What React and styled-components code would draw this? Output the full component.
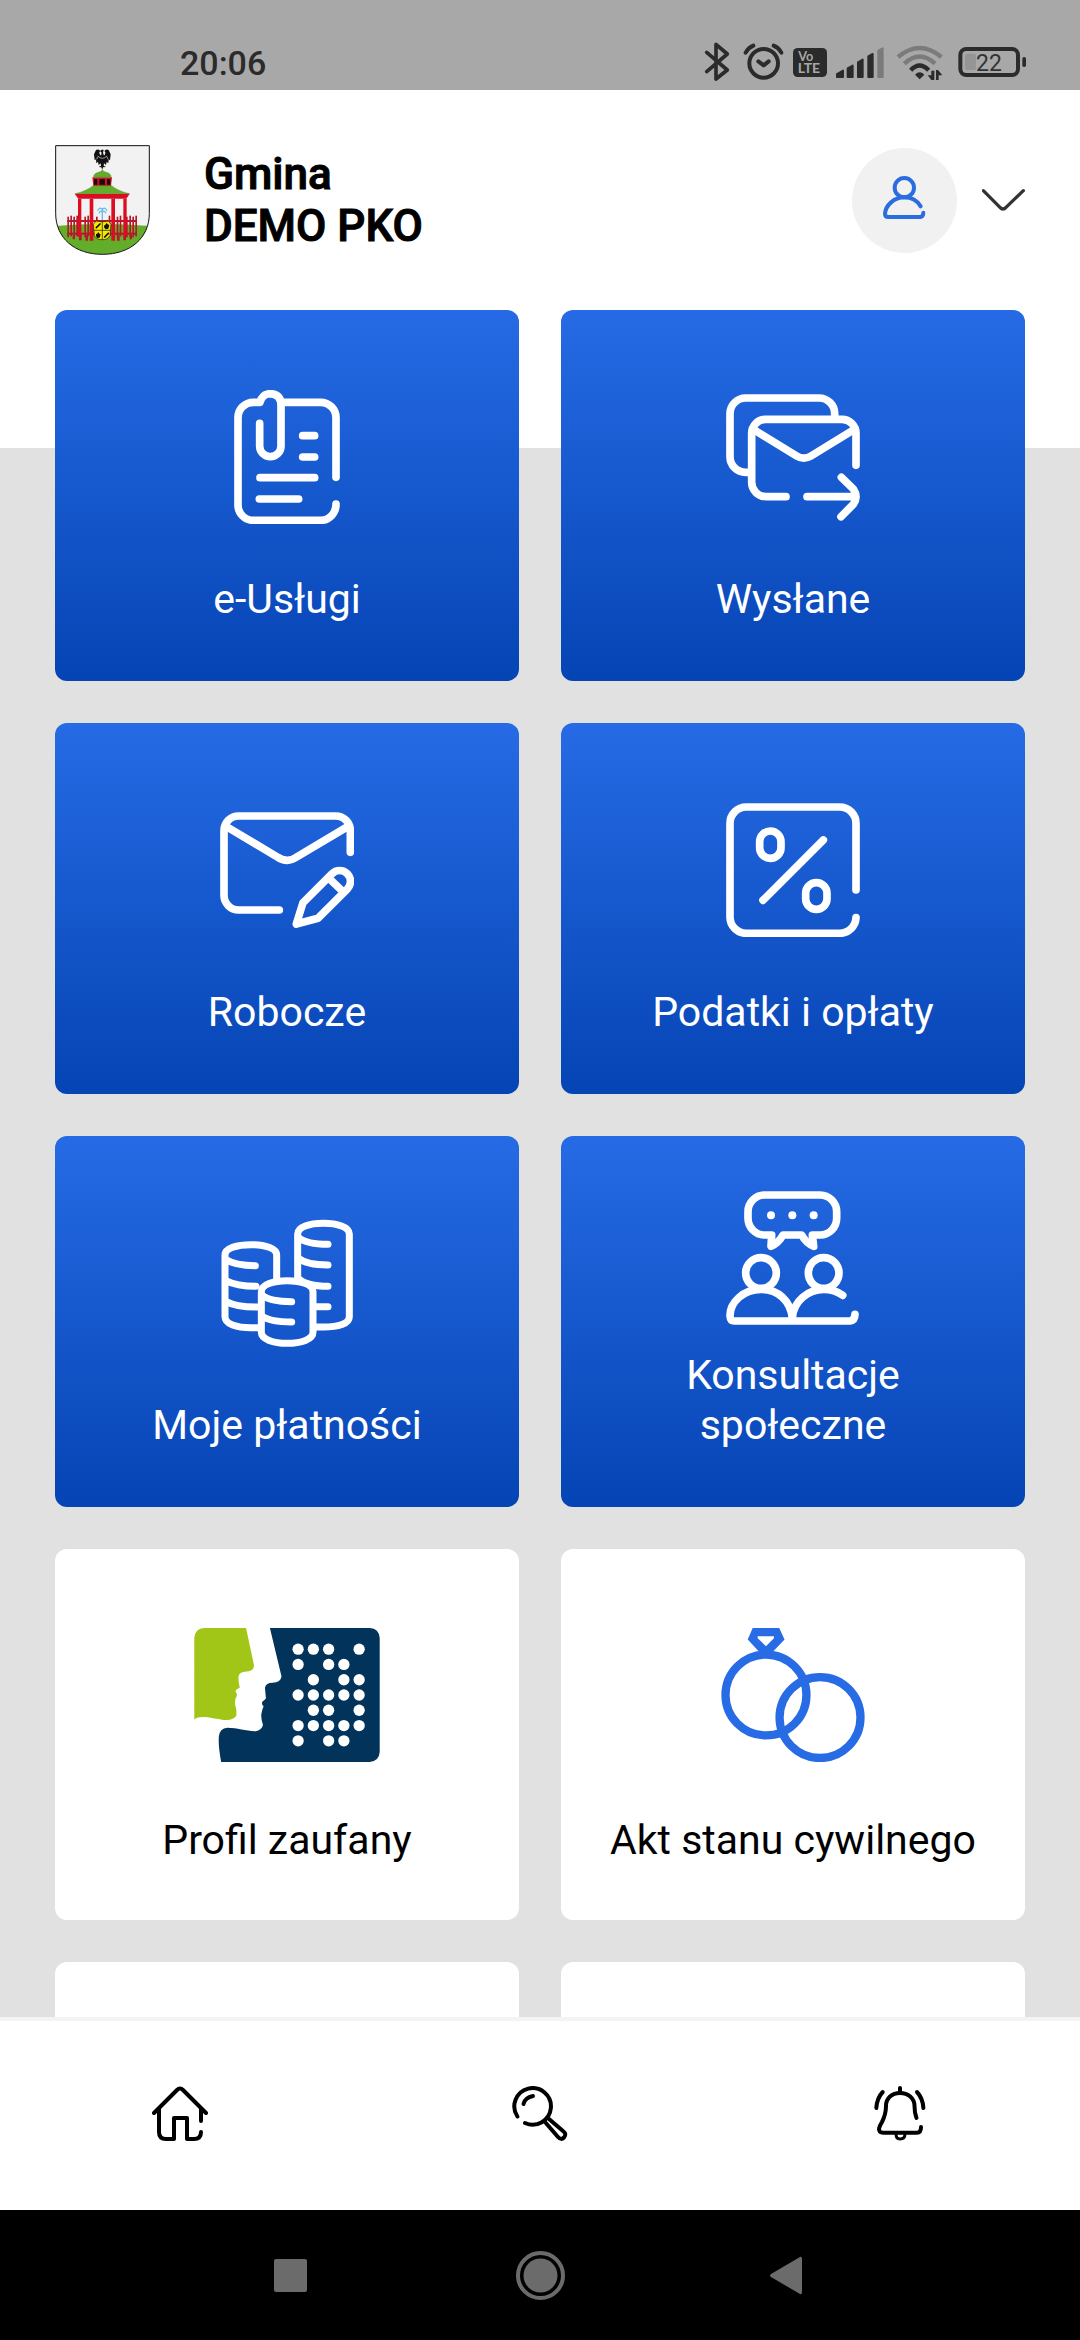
import React from 'react';
import styled, { createGlobalStyle, css } from 'styled-components';

const GlobalStyle = createGlobalStyle`
  * {
    box-sizing: border-box;
  }

  body {
    margin: 0;
    background: #e1e1e1;
    font-family: Roboto, 'Noto Sans', sans-serif;
  }

  button {
    border: 0;
    padding: 0;
    background: none;
    font: inherit;
    color: inherit;
    cursor: pointer;
  }
`;

const Screen = styled.div`
  display: flex;
  flex-direction: column;
  height: 100vh;
`;

const StatusBar = styled.div`
  display: flex;
  flex: none;
  align-items: center;
  justify-content: space-between;
  height: 90px;
  padding: 36px 54px 0 180px;
  background: #a8a8a8;
  color: #2b2b2b;
`;

const Clock = styled.time`
  font-size: 34px;
  font-weight: 500;
  line-height: 44px;
`;

const StatusIcons = styled.div`
  display: flex;
  gap: 10px;

  svg {
    display: block;
    overflow: visible;
  }
`;

const Header = styled.header`
  display: flex;
  flex: none;
  align-items: center;
  height: 220px;
  padding: 0 55px;
  background: white;
`;

const Title = styled.h1`
  flex: 1;
  margin: 0 0 0 54px;
  font-size: 44px;
  font-weight: 500;
  line-height: 52px;
  color: black;
  -webkit-text-stroke: 1px black;
`;

const AccountButton = styled.button`
  display: flex;
  align-items: center;
  gap: 25px;
`;

const Avatar = styled.span`
  display: block;
  width: 105px;
  height: 105px;
  border-radius: 50%;
  background: #f1f1f1;
`;

const Content = styled.main`
  flex: 1;
  min-height: 0;
  overflow-y: auto;
  scrollbar-width: none;
  background: linear-gradient(white 138px, #e1e1e1 138px);
`;

const Tiles = styled.div`
  display: grid;
  grid-template-columns: 1fr 1fr;
  grid-auto-rows: 371px;
  gap: 42px;
  padding: 0 55px 42px;
`;

const Tile = styled.button`
  display: flex;
  flex-direction: column;
  align-items: center;
  border-radius: 12px;

  ${props =>
    props.$primary
      ? css`
          padding: 30px 40px 57px;
          background: linear-gradient(#266be5, #0544b4);
          color: white;
        `
      : css`
          padding: 26px 40px 55px;
          background: white;
          color: black;
        `}
`;

const TileIcon = styled.span`
  display: flex;
  flex: 1;
  align-items: center;
`;

const TileLabel = styled.span`
  font-size: 41px;
  line-height: 50px;
  text-align: center;
`;

const BottomNav = styled.nav`
  display: grid;
  flex: none;
  grid-template-columns: repeat(3, 1fr);
  height: 193px;
  background: white;
  box-shadow: inset 0 4px #f4f4f4;
`;

const NavButton = styled.button`
  display: flex;
  align-items: center;
  justify-content: center;
`;

const SystemNav = styled.div`
  display: flex;
  flex: none;
  align-items: center;
  justify-content: space-between;
  height: 130px;
  padding: 0 266px;
  background: black;
`;

const SystemButton = styled.button`
  display: flex;
  color: #6b6b6b;
`;

const LineSvg = styled.svg`
  display: block;
  fill: none;
  stroke: currentColor;
  stroke-linecap: round;
  stroke-linejoin: round;
`;

const TileSvg = ({ viewBox, strokeWidth = 23, children }) => (
  <LineSvg width="134" height="134" viewBox={viewBox} strokeWidth={strokeWidth}>
    {children}
  </LineSvg>
);

const ServicesIcon = () => (
  <TileSvg viewBox="60 60 402 402">
    <path d="M408 322V143a46 46 0 0 0-46-46H248" />
    <path d="M408 402a46 48 0 0 1-46 49H160a46 46 0 0 1-46-46V143a46 46 0 0 1 46-46h20Q187 71 211 71Q243 73 243 105V228a32 32 0 0 1-64 0V160" />
    <path d="M308 197h36M308 261h36M180 323h164M178 387h118" />
  </TileSvg>
);

const SentIcon = () => (
  <TileSvg viewBox="78 60 402 402">
    <path
      strokeLinecap="butt"
      d="M404 140V130a47 46 0 0 0-47-46H137a47 47 0 0 0-47 47V260a47 47 0 0 0 47 47H150"
    />
    <path d="M468 286V190a42 42 0 0 0-42-42H197a42 42 0 0 0-42 42V337a43 43 0 0 0 43 43H258" />
    <path d="M163 180L290 258Q311 271 333 258L460 180" />
    <path d="M321 380H465M424 322L460 357Q476 380 460 403L423 440" />
  </TileSvg>
);

const DraftsIcon = () => (
  <TileSvg viewBox="60 39 402 402">
    <path d="M451 187V122a44 44 0 0 0-44-44H116a44 44 0 0 0-44 44V316a44 44 0 0 0 44 44H238" />
    <path d="M80 110L232 201Q262 221 290 201L443 110" />
    <path d="M289 402L309 338L396 251A32 32 0 0 1 442 297L354 385Z" />
    <path d="M386 264L430 306" />
  </TileSvg>
);

const TaxesIcon = () => (
  <TileSvg viewBox="258 69 402 402">
    <path d="M648 330V130a49 49 0 0 0-49-49H319a49 49 0 0 0-49 49V411a49 49 0 0 0 49 49H599a49 49 0 0 0 49-47" />
    <rect x="359" y="153" width="64" height="82" rx="32" />
    <rect x="497" y="308" width="64" height="80" rx="32" />
    <path d="M369 361L550 180" />
  </TileSvg>
);

const PaymentsIcon = () => (
  <TileSvg viewBox="240 48 402 402" strokeWidth={21}>
    <path d="M473 235V102C473 81 508 70 550 70C592 70 628 81 628 102V350C628 371 595 381 550 381H530" />
    <path d="M475 112Q500 133 564 133M475 175Q500 195 564 195M475 236Q500 259 564 259M525 320H564" />
    <path d="M410 238V165C410 144 375 134 333 134C290 134 255 145 255 165V350C255 372 290 383 333 383H355" />
    <path d="M257 178Q285 197 346 197M257 242Q290 259 348 259M257 304Q290 322 358 321" />
    <path d="M364 275C364 253 400 242 441 242C485 242 519 253 519 275V397C519 418 485 430 441 430C400 430 364 418 364 397Z" />
    <path d="M366 286Q390 305 455 305M366 348Q390 366 455 366" />
  </TileSvg>
);

const ConsultationsIcon = () => (
  <TileSvg viewBox="168 66 402 402">
    <path d="M305 198H284a50 50 0 0 1-50-50V128a50 50 0 0 1 50-50H450a50 50 0 0 1 50 50V148a50 50 0 0 1-50 50H427L431 232Q408 222 395 198H339Q326 222 303 232Z" />
    <g fill="currentColor" stroke="none">
      <circle cx="303" cy="139" r="12" />
      <circle cx="367" cy="139" r="12" />
      <circle cx="431" cy="139" r="12" />
    </g>
    <circle cx="273" cy="312" r="46" />
    <circle cx="461" cy="312" r="46" />
    <path d="M367 445C360 395 325 361 273 361C220 361 180 400 180 440Q181 456 193 456H540Q555 454 555 436" />
    <path d="M367 445C372 395 415 361 461 361Q495 361 518 379" />
  </TileSvg>
);

const PROFILE_DOTS = ['11101', '10110', '01011', '11111', '01101', '11111', '10110'];

const TrustedProfileIcon = () => (
  <svg width="186" height="134" viewBox="132 84 559 404">
    <path
      fill="#a2c617"
      d="M162 84H288L312 196Q312 214 290 215Q266 216 265 232Q265 248 269 264Q258 268 256 274Q262 282 260 290Q254 298 255 314Q261 332 259 348Q250 364 220 361C190 358 150 344 132 360V114Q134 86 162 84Z"
    />
    <path
      fill="#01335b"
      d="M360 84H661Q689 86 691 114V458Q689 486 661 488H213Q204 440 206 412Q208 387 232 385C262 385 290 396 318 395Q337 391 339 376Q333 360 334 344Q336 332 341 320Q334 314 337 306Q345 302 348 296L345 264Q348 249 368 249Q393 247 395 230Z"
    />
    <g fill="white">
      {PROFILE_DOTS.map((row, y) =>
        row
          .split('')
          .map((dot, x) =>
            dot === '1' ? (
              <circle key={`${x}-${y}`} cx={445 + x * 46} cy={148 + y * 46} r="17" />
            ) : null
          )
      )}
    </g>
  </svg>
);

const RingsIcon = () => (
  <svg width="144" height="134" viewBox="363 84 433 404">
    <g fill="none" stroke="#276be5" strokeWidth="25">
      <circle cx="498" cy="286" r="122" />
      <circle cx="661" cy="354" r="122" />
    </g>
    <path
      fill="#276be5"
      fillRule="evenodd"
      d="M458 84H538L554 119L518 156H478L443 119ZM473 109V115L498 139L522 115V109Z"
    />
  </svg>
);

const FENCE = [112, 121, 130, 139, 163, 172, 198, 236, 260, 269, 288, 298, 307, 316];

const Crest = () => (
  <svg width="95" height="110" viewBox="75 75 285 330" role="img" aria-label="Herb gminy">
    <clipPath id="shield">
      <path d="M77 77H358V280C358 355 300 403 217 403C135 403 77 355 77 280Z" />
    </clipPath>
    <g clipPath="url(#shield)">
      <path fill="#f2f2f2" d="M75 75H360V405H75Z" />
      <path fill="#62ad29" d="M75 318Q217 306 360 318V405H75Z" />
      <path fill="#f2f2f2" d="M190 237H244V312H190Z" />
      {/* fountain */}
      <g fill="none" stroke="#6dbde8" strokeWidth="4">
        <path d="M217 304V264M203 272Q208 260 217 268Q226 260 231 272M207 280Q211 270 217 276Q224 270 228 280" />
      </g>
      {/* fence and pillars */}
      <g fill="#b5182b">
        {FENCE.map((x, i) => (
          <rect key={x} x={x} y={i % 2 ? 287 : 290} width="5" height="62" />
        ))}
        <rect x="112" y="300" width="209" height="6" />
        <rect x="112" y="338" width="209" height="6" />
        <path d="M128 345h7v13h-7zM147 345h8v16h-8zM166 345h8v17h-8zM261 345h8v17h-8zM280 345h8v16h-8zM299 345h7v13h-7z" />
      </g>
      <g fill="#dc0c22">
        <path d="M134 221H299L289 236H145Z" />
        <path d="M144 236h10v114h-10zM179 236h11v126h-11zM244 236h11v126h-11zM280 236h10v114h-10z" />
        <path d="M187 172H246L243 198H190Z" />
      </g>
      <path fill="#111" d="M192 177h10v17h-10zM208 177h17v17h-17zM231 177h10v17h-10z" />
      <path
        fill="#62ad29"
        stroke="#3f7420"
        strokeWidth="1"
        d="M191 172Q190 161 205 157Q214 155 217 149Q220 155 229 157Q244 161 243 172ZM189 197H245Q262 212 298 221H136Q172 212 189 197Z"
      />
      {/* eagle */}
      <path
        fill="#111"
        d="M214 90Q218 87 221 91L219 98L222 107Q227 102 226 97L223 93Q229 86 236 90L242 103L240 121L236 118L235 130L230 125L228 135L222 130L221 137L228 141L219 142L217 149L214 142L206 141L213 137L212 130L206 135L204 125L199 130L198 118L194 121L192 103L198 90Q205 86 211 93L208 97Q207 102 213 107L215 98L210 93Z"
      />
      <path
        fill="none"
        stroke="#ddd"
        strokeWidth="2"
        d="M203 108Q217 122 231 108M200 118L203 110M234 118L231 110"
      />
      {/* small coat of arms */}
      <path
        fill="#f7e600"
        stroke="#111"
        strokeWidth="2"
        d="M198 303Q217 308 236 303L243 313L240 347Q232 360 217 359Q201 360 193 347L190 313Z"
      />
      <path stroke="#111" strokeWidth="2" d="M217 305V359M191 331H242" />
      <path
        stroke="#111"
        strokeWidth="5"
        strokeLinecap="round"
        d="M199 323L210 312M224 351L235 340"
      />
      <path
        fill="#111"
        d="M223 316l5-3 2-5 3 5 5 2-3 11-8 2-5-6zM198 343l5-3 2-4 3 5 4 2-3 10-7 1-4-6z"
      />
    </g>
    <path
      fill="none"
      stroke="#111"
      strokeWidth="3"
      d="M77 77H358V280C358 355 300 403 217 403C135 403 77 355 77 280Z"
    />
  </svg>
);

const AvatarIcon = () => (
  <LineSvg width="105" height="105" viewBox="67 53 315 315" strokeWidth="12">
    <g stroke="#2b6cde">
      <circle cx="224" cy="172" r="29" />
      <path d="M273 228C262 210 242 201 224 201C193 201 168 225 166 250Q166 260 176 260H272Q281 258 281 247" />
    </g>
  </LineSvg>
);

const ChevronIcon = () => (
  <LineSvg width="43" height="40" viewBox="456 150 129 120" strokeWidth="10">
    <path stroke="#333" d="M460 182L510 232Q519 242 528 232L580 182" />
  </LineSvg>
);

const BluetoothIcon = () => (
  <LineSvg width="28" height="44" viewBox="135 63 84 132" strokeWidth="11">
    <path d="M140 97L202 150L168 177V73L202 102L140 155" />
  </LineSvg>
);

const AlarmIcon = () => (
  <LineSvg width="40" height="44" viewBox="249 63 120 132" strokeWidth="12">
    <circle cx="311" cy="130" r="43" />
    <path d="M295 124L311 136L326 124M257 98Q265 83 280 77M341 77Q356 83 364 98" />
  </LineSvg>
);

const VolteIcon = () => (
  <svg width="34" height="44" viewBox="399 63 102 132">
    <rect x="399" y="84" width="102" height="87" rx="14" fill="#2b2b2b" />
    <g fill="#a8a8a8" fontFamily="Lato, sans-serif" fontWeight="700">
      <text x="415" y="122" fontSize="38">Vo</text>
      <text x="413" y="160" fontSize="42">LTE</text>
    </g>
  </svg>
);

const SignalIcon = () => (
  <svg width="49" height="44" viewBox="531 63 147 132" strokeLinejoin="round" strokeWidth="6">
    <g fill="#2b2b2b" stroke="#2b2b2b">
      <path d="M531 171V162L549 152V171Z" />
      <path d="M563 171V145L578 137V171Z" />
      <path d="M594 171V127L608 119V171Z" />
      <path d="M625 171V109L638 102V171Z" />
    </g>
    <path fill="#7b7b7b" stroke="#7b7b7b" d="M655 171V92L668 85V171Z" />
  </svg>
);

const WifiIcon = () => (
  <svg width="50" height="44" viewBox="708 63 150 132" fill="none" strokeWidth="13">
    <path stroke="#7b7b7b" d="M714 111Q779 57 844 111M733 131Q779 88 825 131" />
    <path stroke="#2b2b2b" d="M752 151Q779 122 806 151" />
    <path fill="#2b2b2b" d="M779 178L765 164Q779 150 793 164Z" />
    <path fill="#2b2b2b" d="M814 152h9v28h-9l-11-14h11zM828 180h8v-14h11l-13-16h-6z" />
  </svg>
);

const BatteryIcon = () => (
  <svg width="70" height="44" viewBox="888 63 210 132">
    <rect x="915" y="101" width="33" height="49" rx="6" fill="#959595" />
    <rect
      x="901"
      y="87"
      width="173"
      height="78"
      rx="18"
      fill="none"
      stroke="#2b2b2b"
      strokeWidth="12"
    />
    <rect x="1087" y="111" width="11" height="30" rx="5" fill="#2b2b2b" />
    <text x="948" y="153" fontSize="69" fill="#333">22</text>
  </svg>
);

const HomeIcon = () => (
  <LineSvg width="56" height="56" viewBox="0 0 56 56" strokeWidth="4">
    <path d="M2 27L25 4Q28 1 31 4L54 27" />
    <path d="M49 23V35M7 23V46Q7 53 14 53H22V32H35V53H42Q49 53 49 46" />
  </LineSvg>
);

const SearchIcon = () => (
  <LineSvg width="56" height="56" viewBox="0 0 56 56" strokeWidth="4">
    <path d="M5.4 30.5A18.3 18.3 0 1 1 13 37" />
    <path d="M11.5 18Q13 11.5 21 10" />
    <path d="M33 36L46 51Q49 54.5 52 51.5Q55 48 51 45L37 33" />
  </LineSvg>
);

const BellIcon = () => (
  <LineSvg width="56" height="56" viewBox="0 0 56 56" strokeWidth="4">
    <path d="M28 2V7" />
    <path d="M44.5 32Q42.5 27 42.5 20C42.5 12 36 7 28 7C20 7 14 12 14 20Q14 28 10 36Q7 41 7 43.5Q7.5 46.7 11 46.7H45Q49 46.7 49 41" />
    <path d="M10.7 6Q5 12 4.3 22M45 6Q50.7 12 51.4 22" />
    <path strokeWidth="3" d="M24 48Q24 53 28 53Q33 53 33 48" />
  </LineSvg>
);

const TILES = [
  { label: 'e-Usługi', icon: ServicesIcon, primary: true },
  { label: 'Wysłane', icon: SentIcon, primary: true },
  { label: 'Robocze', icon: DraftsIcon, primary: true },
  { label: 'Podatki i opłaty', icon: TaxesIcon, primary: true },
  { label: 'Moje płatności', icon: PaymentsIcon, primary: true },
  { label: 'Konsultacje społeczne', icon: ConsultationsIcon, primary: true },
  { label: 'Profil zaufany', icon: TrustedProfileIcon },
  { label: 'Akt stanu cywilnego', icon: RingsIcon },
];

const App = () => (
  <Screen>
    <GlobalStyle />
    <StatusBar>
      <Clock>20:06</Clock>
      <StatusIcons>
        <BluetoothIcon />
        <AlarmIcon />
        <VolteIcon />
        <SignalIcon />
        <WifiIcon />
        <BatteryIcon />
      </StatusIcons>
    </StatusBar>
    <Header>
      <Crest />
      <Title>
        Gmina
        <br />
        DEMO PKO
      </Title>
      <AccountButton aria-label="Konto">
        <Avatar>
          <AvatarIcon />
        </Avatar>
        <ChevronIcon />
      </AccountButton>
    </Header>
    <Content>
      <Tiles>
        {TILES.map(({ label, icon: Icon, primary }) => (
          <Tile key={label} $primary={primary}>
            <TileIcon>
              <Icon />
            </TileIcon>
            <TileLabel>{label}</TileLabel>
          </Tile>
        ))}
        <Tile as="div" />
        <Tile as="div" />
      </Tiles>
    </Content>
    <BottomNav>
      <NavButton aria-label="Start">
        <HomeIcon />
      </NavButton>
      <NavButton aria-label="Szukaj">
        <SearchIcon />
      </NavButton>
      <NavButton aria-label="Powiadomienia">
        <BellIcon />
      </NavButton>
    </BottomNav>
    <SystemNav>
      <SystemButton aria-label="Ostatnie">
        <svg width="49" height="49" viewBox="0 0 49 49" fill="currentColor">
          <rect x="8" y="8" width="33" height="33" rx="2" />
        </svg>
      </SystemButton>
      <SystemButton aria-label="Ekran główny">
        <svg width="49" height="49" viewBox="0 0 49 49" fill="currentColor">
          <circle cx="24.5" cy="24.5" r="22.5" fill="none" stroke="currentColor" strokeWidth="4" />
          <circle cx="24.5" cy="24.5" r="17" />
        </svg>
      </SystemButton>
      <SystemButton aria-label="Wstecz">
        <svg width="49" height="49" viewBox="0 0 49 49" fill="currentColor">
          <path d="M35 6Q37 5 37 8V41Q37 44 35 43L6 26Q4 24.5 6 23Z" />
        </svg>
      </SystemButton>
    </SystemNav>
  </Screen>
);

export default App;
